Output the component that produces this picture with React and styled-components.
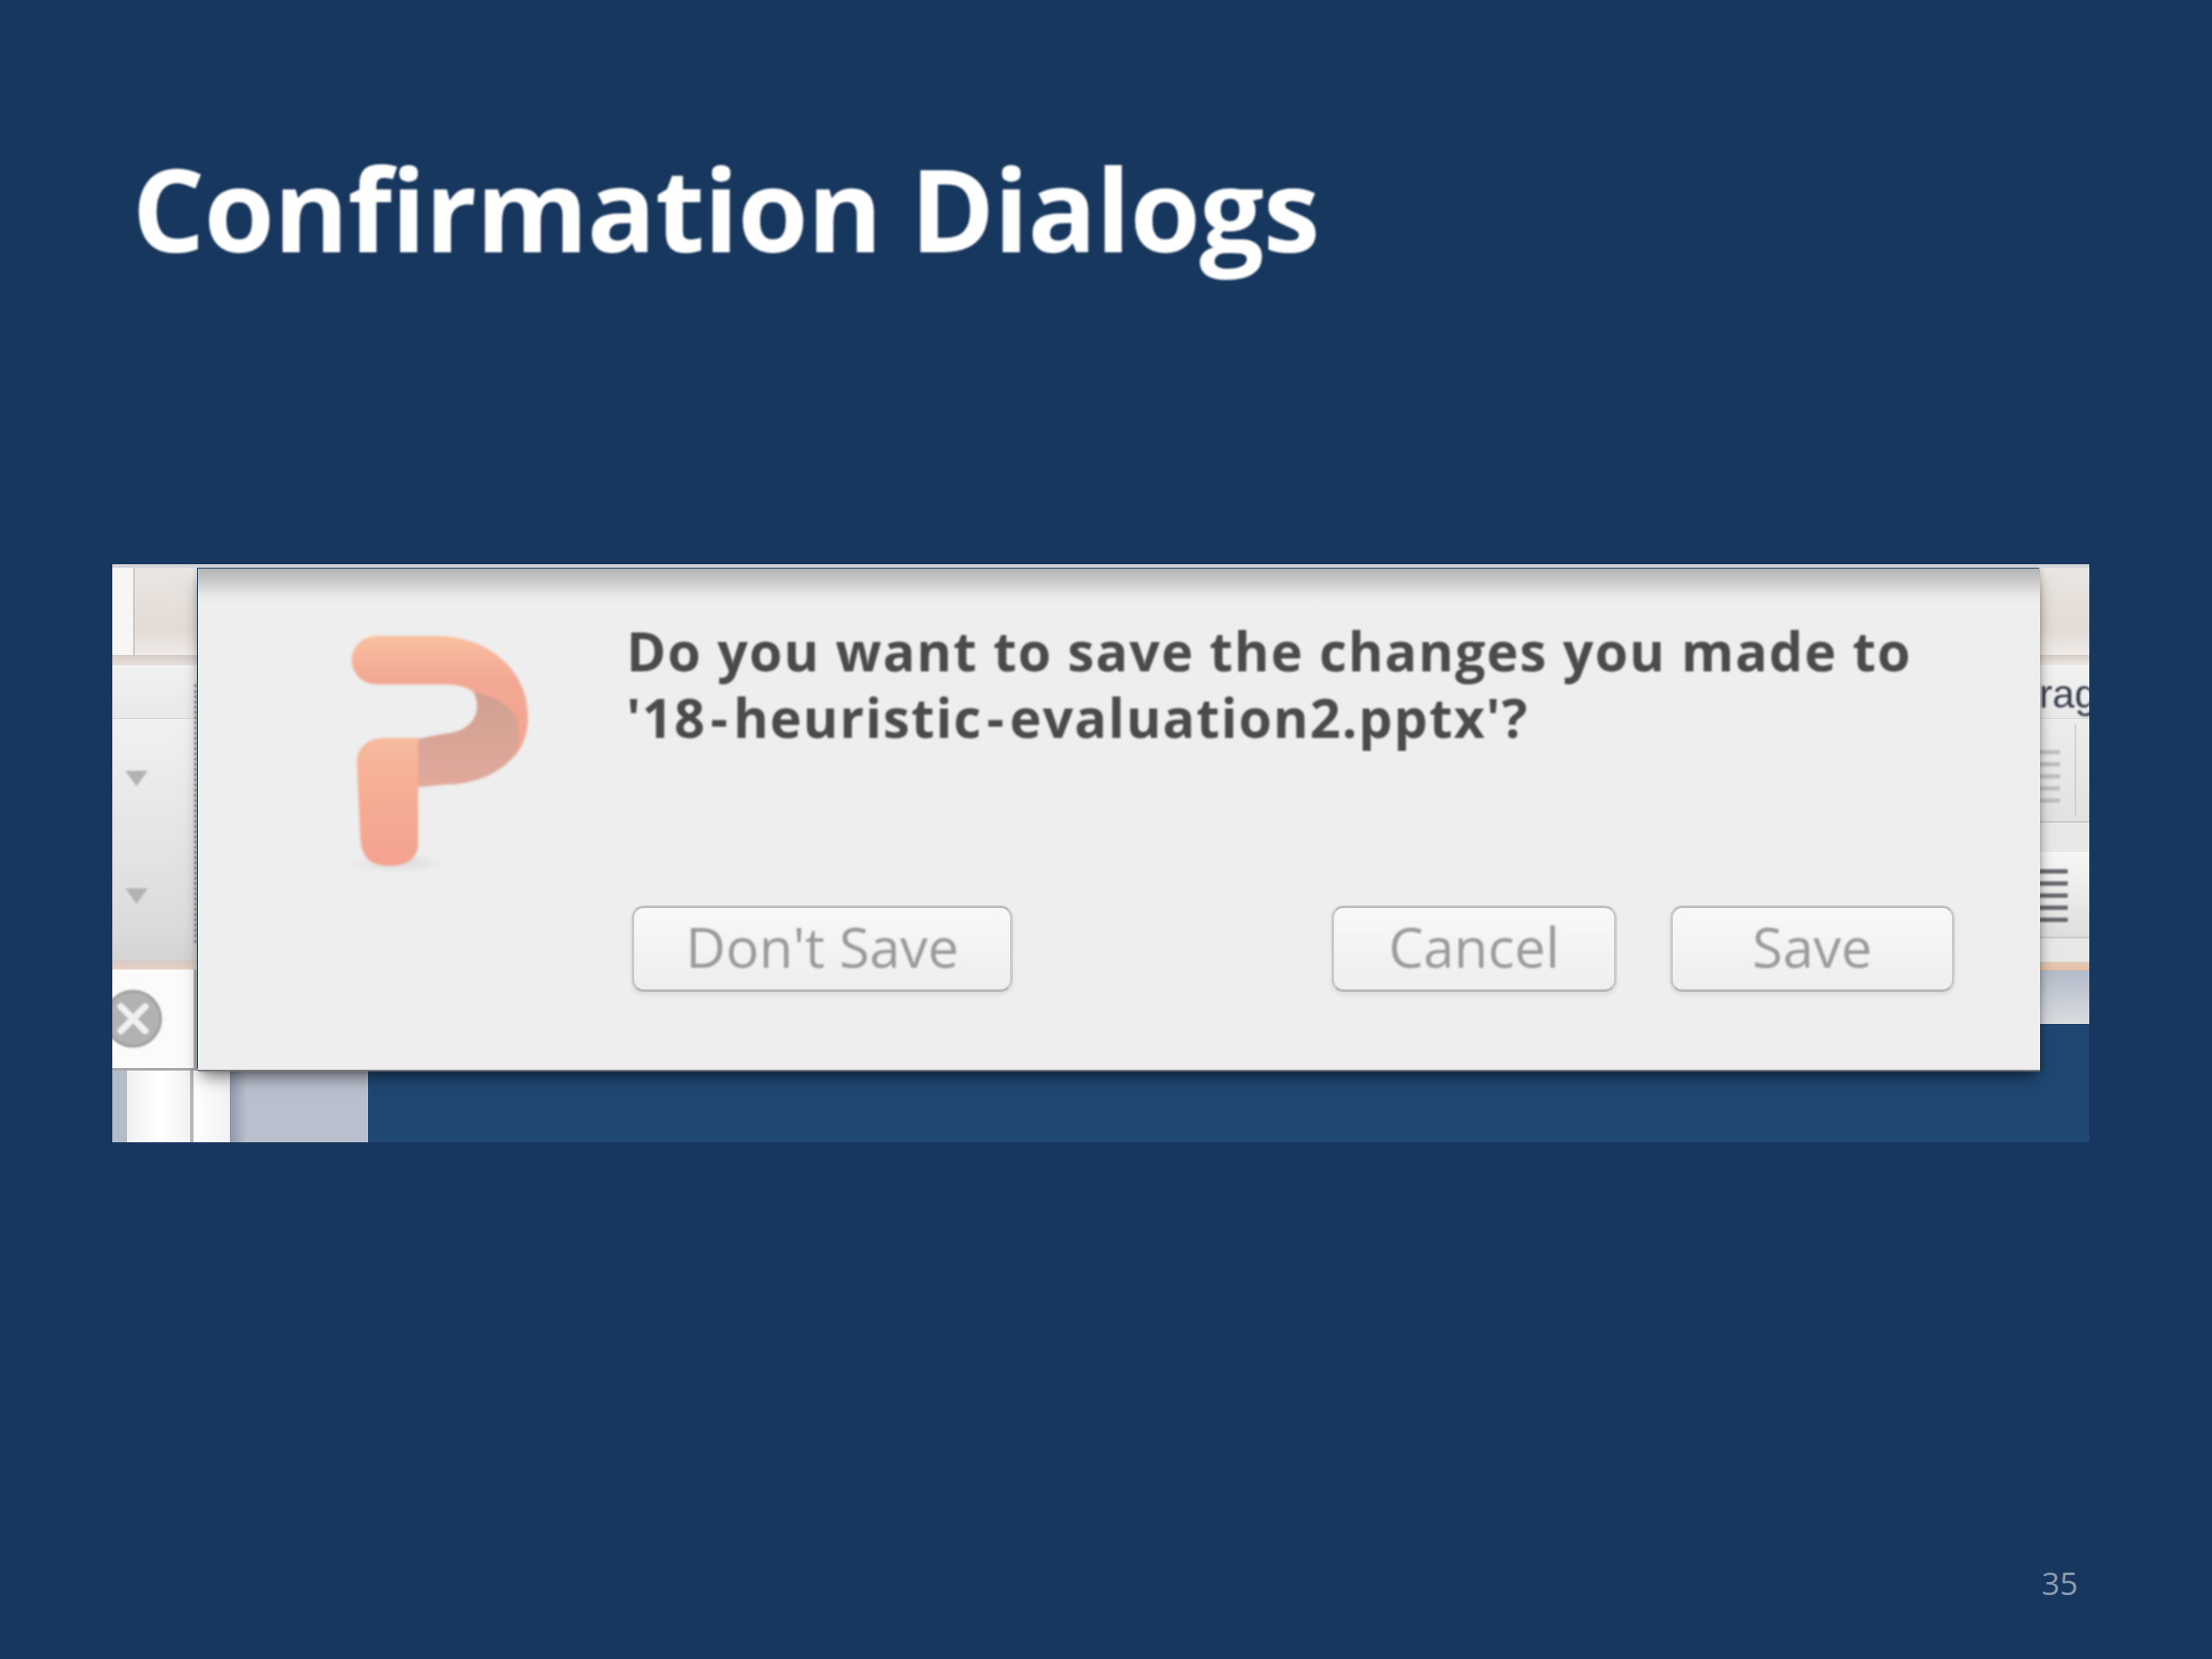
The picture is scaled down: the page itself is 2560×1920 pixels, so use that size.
import React from 'react';
import styled, { createGlobalStyle } from 'styled-components';

const slideBlue = '#17375e';
const dialogGray = '#eeeeee';

const GlobalStyle = createGlobalStyle`
  html, body {
    margin: 0;
    padding: 0;
    background: ${slideBlue};
  }
`;

const Slide = styled.div`
  width: 2560px;
  height: 1920px;
  box-sizing: border-box;
  padding: 0 142px 0 130px;
  display: flex;
  flex-direction: column;
  background: ${slideBlue};
  overflow: hidden;
`;

const Title = styled.h1`
  margin: 161px 0 0 23px;
  height: 492px;
  font-family: "Open Sans", Lato, sans-serif;
  font-weight: 700;
  font-size: 132px;
  line-height: 160px;
  letter-spacing: -1px;
  color: #ffffff;
  white-space: nowrap;
  filter: blur(0.8px);
`;

const Shot = styled.div`
  position: relative;
  flex: none;
  height: 669px;
  box-sizing: border-box;
  display: flex;
  justify-content: space-between;
  background: #1e4872;
  border-top: 4px solid #d4d5da;
  overflow: hidden;
`;

const LeftPane = styled.div`
  position: relative;
  width: 296px;
  display: flex;
  flex-direction: column;

  &::after {
    content: '';
    position: absolute;
    left: 95px;
    top: 135px;
    height: 299px;
    border-left: 3px dotted #7a7e84;
    filter: blur(0.8px);
  }
`;

const RightPane = styled.div`
  width: 58px;
  display: flex;
  flex-direction: column;
  overflow: hidden;
`;

const TitleBarRow = styled.div`
  height: 101px;
  width: ${(p) => p.$width}px;
  flex: none;
  display: flex;
`;

const TitleBarLight = styled.div`
  width: 24px;
  background: #f8f6f5;
  border-right: 2px solid #cfc8c3;
`;

const TitleBarFill = styled.div`
  flex: 1;
  background: linear-gradient(#ece6e2, #e2dbd6 70%, #f0ebe7);
`;

const Band = styled.div`
  height: ${(p) => p.$h}px;
  width: ${(p) => p.$width}px;
  flex: none;
  box-sizing: border-box;
  background: ${(p) => p.$bg};
`;

const TabRow = styled.div`
  height: 62px;
  width: ${(p) => p.$width}px;
  flex: none;
  background: linear-gradient(#f2f2f2, #e9e9e9);
  border-bottom: 1px solid #d6d6d6;
  box-sizing: border-box;
  overflow: hidden;
`;

const ClippedWord = styled.div`
  font-family: "Liberation Sans", Arial, sans-serif;
  font-size: 46px;
  line-height: 66px;
  color: #3a3f4e;
  white-space: nowrap;
  filter: blur(0.9px);
`;

const ToolColumn = styled.div`
  width: 98px;
  height: 279px;
  flex: none;
  box-sizing: border-box;
  padding: 60px 0 0 15px;
  display: flex;
  flex-direction: column;
  gap: 118px;
  background: linear-gradient(#f1f1f1, #dcdcdc 85%, #d4d4d4);
`;

const Arrow = styled.div`
  width: 0;
  height: 0;
  border-left: 13px solid transparent;
  border-right: 13px solid transparent;
  border-top: 18px solid #b2b2b2;
  filter: blur(1px);
`;

const SearchRow = styled.div`
  width: 98px;
  height: 114px;
  flex: none;
  display: flex;
  align-items: center;
  background: #fbfbfb;
  border-right: 4px solid #b5b5b5;
  box-sizing: border-box;
  overflow: hidden;
`;

const ClearIcon = styled.svg`
  flex: none;
  width: 68px;
  height: 68px;
  margin-left: -10px;
  filter: blur(1.2px);
`;

const BottomRow = styled.div`
  margin-top: auto;
  height: 87px;
  display: flex;
  border-top: 3px solid #a8a8a8;
  box-sizing: border-box;
`;

const Strip = styled.div`
  width: ${(p) => p.$w}px;
  flex: ${(p) => (p.$w ? 'none' : 1)};
  background: ${(p) => p.$bg};
`;

const ToolBlock = styled.div`
  height: ${(p) => p.$h}px;
  flex: none;
  box-sizing: border-box;
  padding-top: ${(p) => p.$top}px;
  background: ${(p) => p.$bg};
  border-bottom: 2px solid #c9c9c9;
  position: relative;
`;

const Lines = styled.div`
  width: ${(p) => p.$w}px;
  height: 66px;
  background: repeating-linear-gradient(
    ${(p) => p.$color} 0 5px,
    transparent 5px 14px
  );
  filter: blur(1px);
`;

const Divider = styled.div`
  position: absolute;
  left: 41px;
  top: 6px;
  bottom: 6px;
  width: 2px;
  background: #d0d0d0;
`;

const Dialog = styled.div`
  position: absolute;
  left: 99px;
  right: 57px;
  top: 1px;
  bottom: 82px;
  padding: 67px 99px 90px 171px;
  box-sizing: border-box;
  display: flex;
  flex-direction: column;
  background: linear-gradient(#b4b4b4, #c8c8c8 14px, #e6e6e6 30px, ${dialogGray} 40px);
  border-bottom: 2px solid #77797c;
  box-shadow: 0 10px 18px -4px rgba(0, 0, 0, 0.5), 0 0 7px rgba(0, 0, 0, 0.18);
`;

const DialogBody = styled.div`
  display: flex;
  align-items: flex-start;
`;

const Logo = styled.svg`
  flex: none;
  width: 220px;
  height: 290px;
  filter: blur(1.5px);
`;

const Message = styled.p`
  margin: -10px 0 0 105px;
  font-family: "Open Sans", "DejaVu Sans", sans-serif;
  font-weight: 700;
  font-size: 62px;
  line-height: 77px;
  letter-spacing: 1.6px;
  color: #4b4b4b;
  white-space: nowrap;
  filter: blur(1.1px);
`;

// the filename's hyphens come out wider than the font's in the reference
const Dash = styled.span`
  margin: 0 5px;
`;

const ButtonRow = styled.div`
  margin-top: auto;
  margin-left: 331px;
  display: flex;
  gap: 62px;
`;

const Button = styled.button`
  width: ${(p) => p.$w}px;
  height: 100px;
  margin-right: ${(p) => p.$after || 0}px;
  padding: 0 0 6px;
  box-sizing: border-box;
  border: 3px solid #cacaca;
  border-top-color: #bfbfbf;
  border-bottom-color: #bababa;
  border-radius: 14px;
  background: linear-gradient(#f8f8f8, #f3f3f3 50%, #eeeeee);
  box-shadow: 0 3px 5px rgba(0, 0, 0, 0.08);
  font-family: "Open Sans", "Liberation Sans", sans-serif;
  font-size: 64px;
  color: #9b9b9b;
`;

const ButtonLabel = styled.span`
  display: inline-block;
  filter: blur(0.9px);
`;

const PageNumber = styled.div`
  margin-top: auto;
  margin-bottom: 63px;
  text-align: right;
  padding-right: 13px;
  font-family: "Open Sans", sans-serif;
  font-size: 37px;
  line-height: 50px;
  color: #8c9cb0;
`;

const PowerPointMark = () => (
  <Logo viewBox="0 0 220 290">
    <defs>
      <linearGradient id="front" x1="0" y1="0" x2="0" y2="1">
        <stop offset="0" stopColor="#f8c0a0" />
        <stop offset="0.35" stopColor="#f3a893" />
        <stop offset="1" stopColor="#efa58f" />
      </linearGradient>
      <linearGradient id="stem" x1="0" y1="0" x2="0" y2="1">
        <stop offset="0" stopColor="#f6bb9f" />
        <stop offset="0.3" stopColor="#f6b095" />
        <stop offset="1" stopColor="#f3a28f" />
      </linearGradient>
      <linearGradient id="fold" x1="0" y1="0" x2="0" y2="1">
        <stop offset="0" stopColor="#d0a092" />
        <stop offset="1" stopColor="#e0a99a" />
      </linearGradient>
      <radialGradient id="ground">
        <stop offset="0" stopColor="#dcdcdc" />
        <stop offset="1" stopColor="#eeeeee" />
      </radialGradient>
    </defs>
    <ellipse cx="60" cy="274" rx="60" ry="12" fill="url(#ground)" />
    <path
      d="M84 130 L115 124 C140 122 152 108 152 93 C152 85 150 80 148 76 C175 80 200 90 210 107 C210 155 165 183 115 183 L84 186 Z"
      fill="url(#fold)"
    />
    <path
      d="M35 11 L105 11 C165 11 211 50 211 105 C211 125 205 140 194 152 C200 135 202 120 198 107 C190 90 170 80 148 76 C140 70 130 67 115 67 L35 67 A28 28 0 0 1 35 11 Z"
      fill="url(#front)"
    />
    <path
      d="M13 158 C13 138 28 129 45 129 L84 129 L84 250 C84 270 70 277 50 277 C30 277 18 268 17 245 Z"
      fill="url(#stem)"
    />
  </Logo>
);

const App = () => (
  <Slide>
    <GlobalStyle />
    <Title>Confirmation Dialogs</Title>
    <Shot>
      <LeftPane>
        <TitleBarRow $width={98}>
          <TitleBarLight />
          <TitleBarFill />
        </TitleBarRow>
        <Band $h={12} $width={98} $bg="linear-gradient(#d5ccc8, #e8dfdc)" />
        <TabRow $width={98} />
        <ToolColumn>
          <Arrow />
          <Arrow />
        </ToolColumn>
        <Band $h={11} $width={98} $bg="linear-gradient(#d9cbc7, #e6cfc6)" />
        <SearchRow>
          <ClearIcon viewBox="0 0 68 68">
            <circle cx="34" cy="34" r="32" fill="#b2b2b2" stroke="#a0a0a0" strokeWidth="3" />
            <path d="M20 20 L48 48 M48 20 L20 48" stroke="#f0f0f0" strokeWidth="8" strokeLinecap="round" />
          </ClearIcon>
        </SearchRow>
        <BottomRow>
          <Strip $w={17} $bg="#b4bcc9" />
          <Strip $w={73} $bg="linear-gradient(90deg, #f0f0f0, #ffffff 50%, #f2f2f2)" />
          <Strip $w={4} $bg="#b5b5b5" />
          <Strip $w={42} $bg="linear-gradient(90deg, #ffffff, #f2f2f2)" />
          <Strip $bg="linear-gradient(90deg, #8f97a8, #b9bfcc 12%, #b9bfcc)" />
        </BottomRow>
      </LeftPane>
      <RightPane>
        <TitleBarRow>
          <TitleBarFill />
        </TitleBarRow>
        <Band $h={12} $bg="linear-gradient(#d5ccc8, #eee6e2)" />
        <TabRow>
          <ClippedWord>rag</ClippedWord>
        </TabRow>
        <ToolBlock $h={120} $top={36} $bg="linear-gradient(#ededed, #e2e2e2)">
          <Lines $w={24} $color="#c0c0c0" />
          <Divider />
        </ToolBlock>
        <Band $h={34} $bg="#e8e8e8" />
        <ToolBlock $h={100} $top={20} $bg="linear-gradient(#f7f7f7, #dedede)">
          <Lines $w={33} $color="#66686d" />
        </ToolBlock>
        <Band $h={27} $bg="#e7e7e7" />
        <Band $h={10} $bg="linear-gradient(#e2c9b9, #e9bda3)" />
        <Band $h={62} $bg="linear-gradient(#b3bbc9, #d9dce0)" />
      </RightPane>
      <Dialog>
        <DialogBody>
          <PowerPointMark />
          <Message>
            Do you want to save the changes you made to
            <br />
            '18<Dash>-</Dash>heuristic<Dash>-</Dash>evaluation2.pptx'?
          </Message>
        </DialogBody>
        <ButtonRow>
          <Button $w={442} $after={307}>
            <ButtonLabel>Don't Save</ButtonLabel>
          </Button>
          <Button $w={330}>
            <ButtonLabel>Cancel</ButtonLabel>
          </Button>
          <Button $w={330}>
            <ButtonLabel>Save</ButtonLabel>
          </Button>
        </ButtonRow>
      </Dialog>
    </Shot>
    <PageNumber>35</PageNumber>
  </Slide>
);

export default App;
